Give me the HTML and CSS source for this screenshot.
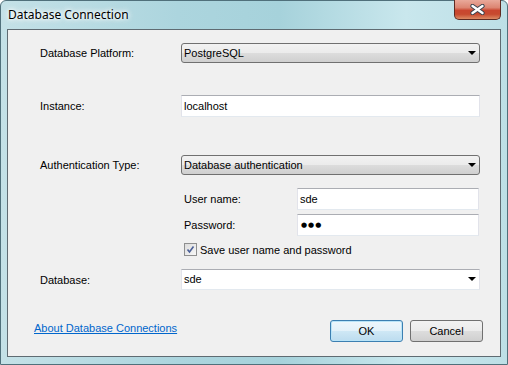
FILE: index.html
```html
<!DOCTYPE html>
<html lang="en">
<head>
  <meta charset="UTF-8" />
  <title>Database Connection</title>
  <link rel="stylesheet" href="styles.css">
</head>
<body>

<div class="window">
  <!-- Title bar -->
  <div class="titlebar">
    <span class="title">Database Connection</span>
    <div class="close-btn">
      <svg width="17" height="11" viewBox="0 0 17 11">
        <path d="M3.5 2 L13.5 9 M13.5 2 L3.5 9" stroke="#35404c" stroke-width="4.2" fill="none" stroke-linecap="round"/>
        <path d="M3.5 2 L13.5 9 M13.5 2 L3.5 9" stroke="#fff" stroke-width="2.4" fill="none" stroke-linecap="round"/>
      </svg>
    </div>
  </div>

  <!-- Dialog body -->
  <div class="panel">
    <div class="row row-platform">
      <span class="label">Database Platform:</span>
      <div class="combo">PostgreSQL<span class="arrow"></span></div>
    </div>

    <div class="row row-instance">
      <span class="label">Instance:</span>
      <div class="textbox wide">localhost</div>
    </div>

    <div class="row row-auth">
      <span class="label">Authentication Type:</span>
      <div class="combo">Database authentication<span class="arrow"></span></div>
    </div>

    <div class="sub-row row-user">
      <span class="sub-label">User name:</span>
      <div class="textbox">sde</div>
    </div>

    <div class="sub-row row-pass">
      <span class="sub-label">Password:</span>
      <div class="textbox dots">&#9679;&#9679;&#9679;</div>
    </div>

    <div class="sub-row row-check">
      <span class="checkbox">
        <svg width="9" height="9" viewBox="0 0 9 9">
          <path d="M1.5 4.5 L3.5 7 L7.5 1.5" stroke="#4a5f97" stroke-width="1.6" fill="none"/>
        </svg>
      </span>
      <span>Save user name and password</span>
    </div>

    <div class="row row-db">
      <span class="label">Database:</span>
      <div class="textbox wide editable">sde<span class="arrow"></span></div>
    </div>

    <div class="footer">
      <a class="help-link" href="#">About Database Connections</a>
      <div class="buttons">
        <div class="btn btn-default">OK</div>
        <div class="btn">Cancel</div>
      </div>
    </div>
  </div>
</div>

</body>
</html>
```

FILE: styles.css
```css
* {
  margin: 0;
  padding: 0;
  box-sizing: border-box;
}

body {
  font-family: 'Liberation Sans', Arial, sans-serif;
  font-size: 11px;
  color: #000;
  background: #fff;
}

.window {
  width: 508px;
  height: 365px;
  display: flex;
  flex-direction: column;
  border: 1px solid #50707b;
  border-radius: 6px 6px 0 0;
  padding: 0 6px 7px 6px;
  background: linear-gradient(to right, #c4e1e7 0%, #acd5de 35%, #a6d2db 55%, #c9e7ed 80%, #bddfe6 100%);
}

.titlebar {
  height: 28px;
  display: flex;
  align-items: flex-start;
  justify-content: space-between;
}

.title {
  font-family: 'Noto Sans', sans-serif;
  font-size: 12px;
  margin: 5px 0 0 1px;
  color: #000;
  text-shadow: 0 0 6px #fff, 0 0 6px #fff, 0 0 3px #fff;
}

.close-btn {
  width: 47px;
  height: 20px;
  margin-top: -1px;
  border: 1px solid #5e2a22;
  border-top: none;
  border-radius: 0 0 5px 5px;
  background: linear-gradient(to bottom, #e9a99a 0%, #dc8572 40%, #c9462f 55%, #c74a2f 75%, #dc8a63 100%);
  display: flex;
  align-items: center;
  justify-content: center;
}

.panel {
  flex: 1;
  border: 1px solid #5f6b72;
  background: #f0f0f0;
  padding: 0 20px 0 32px;
}

.row {
  display: flex;
  align-items: center;
}

.label {
  width: 141px;
}

.row-platform { margin-top: 13px; }
.row-instance { margin-top: 32px; }
.row-auth { margin-top: 38px; }
.row-db { margin-top: 13px; }

.combo {
  position: relative;
  width: 299px;
  height: 20px;
  line-height: 18px;
  padding-left: 2px;
  border: 1px solid #707070;
  border-radius: 3px;
  background: linear-gradient(to bottom, #f2f2f2 0%, #ebebeb 50%, #dddddd 50%, #cfcfcf 100%);
}

.arrow {
  position: absolute;
  right: 3px;
  top: 7px;
  width: 0;
  height: 0;
  border-left: 4px solid transparent;
  border-right: 4px solid transparent;
  border-top: 4px solid #000;
}

.textbox {
  position: relative;
  width: 182px;
  height: 22px;
  line-height: 20px;
  padding-left: 2px;
  background: #fff;
  border: 1px solid #e2e3ea;
  border-top-color: #abadb3;
  border-bottom-color: #e3e9ef;
}

.textbox.wide {
  width: 299px;
}

.textbox.editable {
  height: 21px;
  line-height: 19px;
}

.dots {
  font-family: 'DejaVu Sans', sans-serif;
  font-size: 7px;
  letter-spacing: 1px;
  padding-left: 3px;
}

.sub-row {
  display: flex;
  align-items: center;
  padding-left: 144px;
}

.sub-label {
  width: 113px;
}

.row-user { margin-top: 13px; }
.row-pass { margin-top: 4px; }
.row-check { margin-top: 7px; height: 13px; }

.checkbox {
  width: 13px;
  height: 13px;
  margin-right: 3px;
  border: 1px solid #8e8f8f;
  background: linear-gradient(to bottom right, #dcdcdc, #f7f7f7);
  display: flex;
  align-items: center;
  justify-content: center;
}

.footer {
  margin-top: 30px;
  margin-left: -6px;
  margin-right: -3px;
  display: flex;
  align-items: center;
  justify-content: space-between;
}

.help-link {
  color: #0066cc;
  text-decoration: underline;
  margin-top: -6px;
}

.buttons {
  display: flex;
  gap: 7px;
}

.btn {
  width: 73px;
  height: 22px;
  line-height: 20px;
  text-align: center;
  border: 1px solid #707070;
  border-radius: 3px;
  background: linear-gradient(to bottom, #f2f2f2 0%, #ebebeb 50%, #dddddd 50%, #cfcfcf 100%);
}

.btn-default {
  border-color: #3c7fb1;
  box-shadow: inset 0 0 0 1px #b9e4f8;
  background: linear-gradient(to bottom, #eef7fc 0%, #e3f1f9 50%, #cfe8f5 50%, #bcdcef 100%);
}
```
